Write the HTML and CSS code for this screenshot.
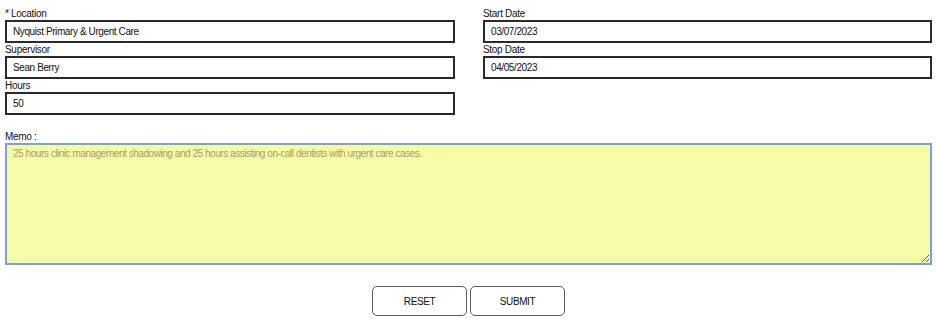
FILE: index.html
```html
<!DOCTYPE html>
<html lang="en">
<head>
  <meta charset="UTF-8">
  <title>Hours Entry</title>
  <link rel="stylesheet" href="styles.css">
</head>
<body>

<form class="entry-form">
  <div class="columns">
    <div class="col">
      <label class="field-label">* Location</label>
      <input class="field" type="text" value="Nyquist Primary &amp; Urgent Care">
      <label class="field-label">Supervisor</label>
      <input class="field" type="text" value="Sean Berry">
      <label class="field-label">Hours</label>
      <input class="field" type="text" value="50">
    </div>
    <div class="col">
      <label class="field-label">Start Date</label>
      <input class="field" type="text" value="03/07/2023">
      <label class="field-label">Stop Date</label>
      <input class="field" type="text" value="04/05/2023">
    </div>
  </div>

  <label class="field-label memo-label">Memo :</label>
  <textarea class="memo">25 hours clinic management shadowing and 25 hours assisting on-call dentists with urgent care cases.</textarea>

  <div class="actions">
    <button type="reset">RESET</button>
    <button type="button">SUBMIT</button>
  </div>
</form>

</body>
</html>
```

FILE: styles.css
```css
body {
  margin: 0;
  padding: 0;
  background: #fff;
  font-family: 'Liberation Sans', Arial, sans-serif;
  font-size: 10px;
  color: #000;
}

.entry-form {
  width: 927px;
  padding: 7px 0 0 5px;
}

.columns {
  display: grid;
  grid-template-columns: 450px 449px;
  column-gap: 28px;
}

.col {
  display: flex;
  flex-direction: column;
}

.field-label {
  display: block;
  height: 13px;
  line-height: 13px;
  letter-spacing: -0.3px;
  color: #111;
}

.field {
  box-sizing: border-box;
  height: 23px;
  width: 100%;
  margin: 0;
  padding: 0 6px;
  border: 2px solid #2a2a2a;
  border-radius: 0;
  font-family: inherit;
  font-size: 10px;
  letter-spacing: -0.4px;
  color: #111;
  background: #fff;
}

.memo-label {
  margin-top: 15px;
}

.memo {
  display: block;
  box-sizing: border-box;
  width: 927px;
  height: 122px;
  margin: 0;
  padding: 3px 6px;
  border: 2px solid #7fa0d6;
  background: #f7fba8;
  font-family: inherit;
  font-size: 10px;
  letter-spacing: -0.45px;
  color: #a0a06c;
  resize: both;
}

.actions {
  display: flex;
  justify-content: center;
  gap: 3px;
  margin-top: 21px;
}

.actions button {
  width: 95px;
  height: 30px;
  padding: 0;
  border: 1px solid #5c5c5c;
  border-radius: 5px;
  background: #fff;
  font-family: inherit;
  font-size: 10px;
  letter-spacing: -0.4px;
  color: #111;
}
```
